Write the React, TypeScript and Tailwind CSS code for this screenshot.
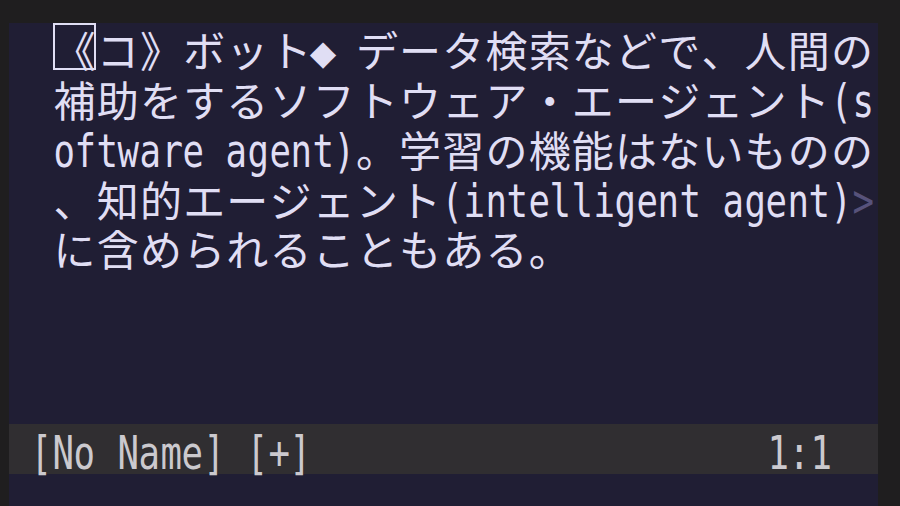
import React from "react";

const isWide = (ch: string) => {
  const c = ch.codePointAt(0) || 0;
  if (c >= 0x2e80 && c <= 0x9fff) return true;
  if (c >= 0xf900 && c <= 0xfaff) return true;
  if (c >= 0xff00 && c <= 0xff60) return true;
  return false;
};

function Cell({ ch, dim, cursor, muted }: { ch: string; dim?: boolean; cursor?: boolean; muted?: boolean }) {
  const wide = isWide(ch);
  const color = dim ? "text-[#57527a]" : muted ? "text-[#cbc9ce]" : "text-[#e0def4]";
  if (wide) {
    return (
      <span className={`relative inline-flex w-[43.2px] shrink-0 justify-center font-['Noto_Sans_CJK_JP',sans-serif] text-[42px] leading-none ${color}`}>
        {cursor && (
          <span className="absolute left-0 top-[-5px] h-[47px] w-[43px] border-2 border-[#e0def4]" />
        )}
        {ch}
      </span>
    );
  }
  if (ch === "◆") {
    return (
      <span className={`inline-flex w-[21.6px] shrink-0 justify-center font-['DejaVu_Sans_Mono',monospace] text-[44px] leading-none ${color}`}>
        <span className="inline-block">{ch}</span>
      </span>
    );
  }
  return (
    <span className={`inline-flex w-[21.6px] shrink-0 justify-center font-['DejaVu_Sans_Mono',monospace] text-[47px] leading-none ${color}`}>
      <span className="inline-block scale-x-[0.76]">{ch === " " ? "\u00a0" : ch}</span>
    </span>
  );
}

function Row({ text, dimTail, cursorAt }: { text: string; dimTail?: string; cursorAt?: number }) {
  const chars = Array.from(text);
  return (
    <div className="flex h-[50px] items-baseline pl-[44px] pt-[4px]">
      {chars.map((ch, i) => (
        <Cell key={i} ch={ch} cursor={cursorAt === i} />
      ))}
      {dimTail && Array.from(dimTail).map((ch, i) => <Cell key={"d" + i} ch={ch} dim />)}
    </div>
  );
}

export default function App() {
  return (
    <div className="h-[506px] w-[900px] overflow-hidden bg-[#1f1e1f] pl-[9px] pr-[22px] pt-[23px]">
      <div className="flex h-[520px] flex-col bg-[#201e34]">
        <Row text="《コ》ボット◆ データ検索などで、人間の" cursorAt={0} />
        <Row text="補助をするソフトウェア・エージェント(s" />
        <Row text="oftware agent)。学習の機能はないものの" />
        <Row text="、知的エージェント(intelligent agent)" dimTail=">" />
        <Row text="に含められることもある。" />
        <div className="h-[151px]" />
        <div className="flex h-[50px] items-baseline bg-[#302e31] pl-[21.6px] pt-[5px]">
          {Array.from("[No Name] [+]").map((ch, i) => (
            <Cell key={i} ch={ch} muted />
          ))}
          <div className="flex-1" />
          {Array.from("1:1").map((ch, i) => (
            <Cell key={"r" + i} ch={ch} muted />
          ))}
          <div className="w-[46px]" />
        </div>
      </div>
    </div>
  );
}
